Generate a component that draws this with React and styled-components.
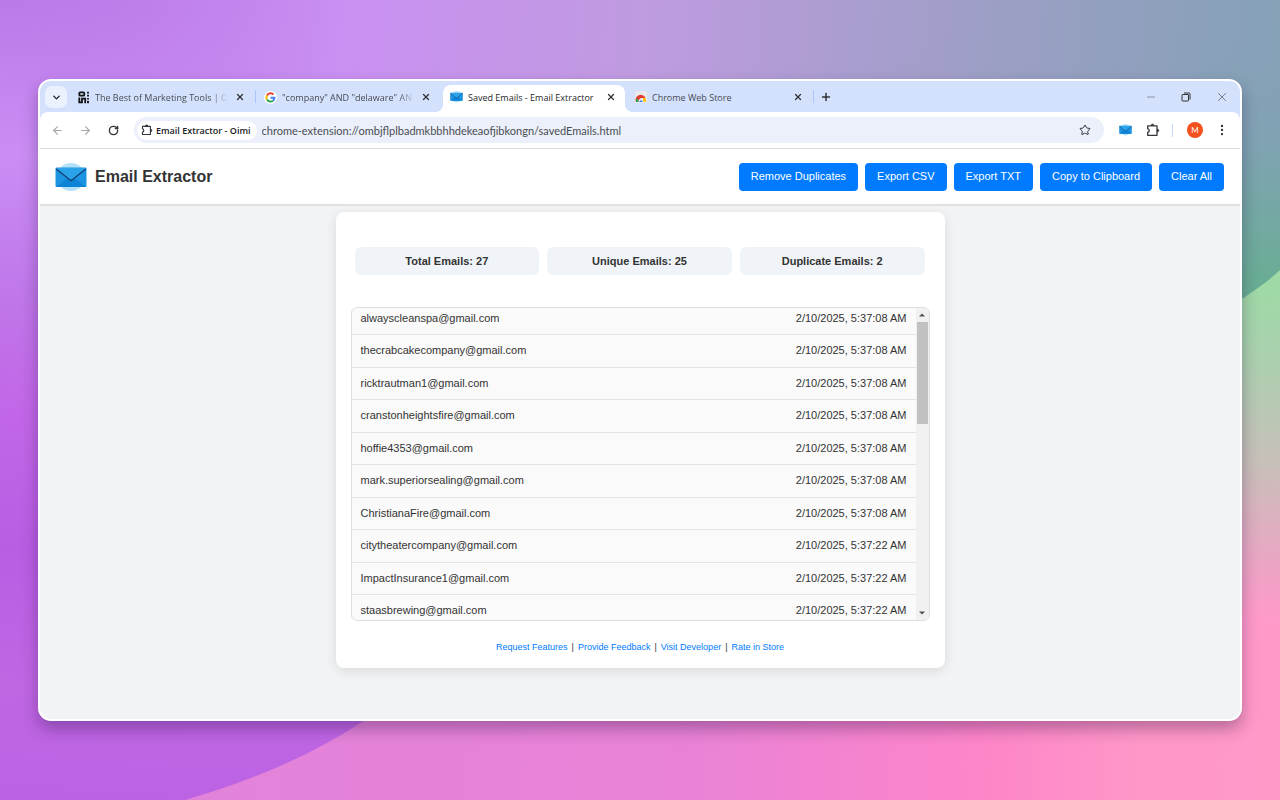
import React, { useLayoutEffect, useRef } from "react";
import styled, { createGlobalStyle } from "styled-components";
import { ArrowLeft, ArrowRight, ChevronDown, X, Plus, Minus, Star, RotateCw, EllipsisVertical } from "lucide-react";

const addressFont = 'Lato, "Open Sans", sans-serif';
const uiFont = '"Open Sans", "Noto Sans", sans-serif';
const pageFont = '"Liberation Sans", Arial, sans-serif';

const GlobalStyle = createGlobalStyle`
  *, *::before, *::after { box-sizing: border-box; }
  body { margin: 0; font-family: ${pageFont}; color: #333; }
  button, input { font: inherit; }
  button { border: 0; padding: 0; background: none; color: inherit; cursor: pointer; }
  svg { display: block; flex: none; }
`;

const Desktop = styled.div`
  position: relative;
  min-height: 100vh;
  display: flex;
  flex-direction: column;
  padding: 79px 38px;
  overflow: hidden;
`;

const Wallpaper = styled.svg`
  position: absolute;
  inset: 0;
  width: 100%;
  height: 100%;
`;

const Window = styled.main`
  position: relative;
  flex: 1;
  display: flex;
  flex-direction: column;
  border: 2px solid #fff;
  border-radius: 13px;
  background: #f2f3f5;
  box-shadow: 0 8px 16px rgba(30, 10, 60, 0.32);
  overflow: hidden;
`;

const BrowserChrome = styled.div`
  background: #d3e1fd;
`;

const TabStrip = styled.header`
  display: flex;
  align-items: flex-end;
  height: 31px;
  padding-left: 5px;
  font-family: ${uiFont};
  font-size: 9px;
  color: #474b52;
`;

const TabSearch = styled.button`
  display: grid;
  place-items: center;
  width: 22px;
  height: 22px;
  margin-bottom: 4px;
  border-radius: 7px;
  background: #ebf1fd;
  color: #222;
`;

const Tabs = styled.nav`
  display: flex;
  align-items: flex-end;
  margin-left: 3px;
`;

const Tab = styled.div`
  position: relative;
  display: flex;
  align-items: center;
  gap: 5px;
  width: ${(p) => p.$width}px;
  height: 27px;
  padding: 0 7px 3px;
  border-radius: 8px 8px 0 0;
  background: ${(p) => (p.$active ? "#fff" : "transparent")};
  color: ${(p) => (p.$active ? "#26282b" : "inherit")};
  &::before, &::after {
    content: "";
    display: ${(p) => (p.$active ? "block" : "none")};
    position: absolute;
    bottom: 0;
    width: 8px;
    height: 8px;
  }
  &::before { left: -8px; background: radial-gradient(circle at 0 0, transparent 8px, #fff 8px); }
  &::after { right: -8px; background: radial-gradient(circle at 100% 0, transparent 8px, #fff 8px); }
`;

const TabTitle = styled.span`
  flex: 1;
  overflow: hidden;
  white-space: nowrap;
  mask-image: ${(p) => (p.$fade ? "linear-gradient(90deg, #000 88%, transparent)" : "none")};
`;

const TabDivider = styled.span`
  width: 1px;
  height: 13px;
  margin: 0 1px 9px;
  background: ${(p) => (p.$clear ? "transparent" : "#a8c7fa")};
`;

const ToolbarDivider = styled.span`
  width: 1px;
  height: 13px;
  margin: 0 5px;
  background: #c5d8fa;
`;

const IconButton = styled.button`
  display: grid;
  place-items: center;
  width: ${(p) => p.$width || 14}px;
  height: 20px;
  color: ${(p) => p.$color || "#303236"};
`;

const NewTab = styled(IconButton)`
  margin: 0 0 5px 4px;
`;

const WindowControls = styled.div`
  display: flex;
  margin-left: auto;
  margin-bottom: 5px;
`;

const Toolbar = styled.div`
  display: flex;
  align-items: center;
  height: 37px;
  padding: 0 8px;
  border-bottom: 1px solid #dcdde0;
  border-radius: 8px 8px 0 0;
  background: #fff;
  font-family: ${addressFont};
`;

const NavButtons = styled.div`
  display: flex;
`;

const AddressBar = styled.div`
  flex: 1;
  display: flex;
  align-items: center;
  gap: 5px;
  height: 26px;
  margin: 0 7px 0 11px;
  padding: 0 9px 0 3px;
  border-radius: 13px;
  background: #ebf0fa;
`;

const ExtensionChip = styled.span`
  display: flex;
  align-items: center;
  gap: 3px;
  height: 19px;
  padding: 0 6px 0 4px;
  border-radius: 10px;
  background: #fff;
  font-family: ${uiFont};
  font-size: 9px;
  font-weight: 600;
  color: #202226;
  white-space: nowrap;
`;

const Address = styled.input`
  flex: 1;
  min-width: 0;
  padding: 0;
  border: 0;
  outline: 0;
  background: none;
  color: #4a4d53;
  font-size: 11px;
`;

const Avatar = styled.button`
  width: 16px;
  height: 16px;
  margin: 0 9px;
  border-radius: 50%;
  background: #f4511e;
  color: #fff;
  font-size: 8px;
  line-height: 16px;
`;

const AppHeader = styled.header`
  display: flex;
  align-items: center;
  justify-content: space-between;
  height: 57px;
  padding: 0 16px 0 15px;
  border-bottom: 2px solid #e0e1e3;
  background: #fff;
`;

const Brand = styled.div`
  display: flex;
  align-items: center;
  gap: 8px;
`;

const BrandName = styled.h1`
  margin: 0;
  font-size: 16px;
  line-height: 20px;
`;

const Actions = styled.div`
  display: flex;
  gap: 7px;
`;

const ActionButton = styled.button`
  height: 28px;
  padding: 0 12px 2px;
  border-radius: 4px;
  background: #007bff;
  color: #fff;
  font-size: 11px;
  white-space: nowrap;
`;

const Card = styled.section`
  width: 100%;
  max-width: 609px;
  margin: 6px auto 0;
  padding: 35px 15px 14px;
  border-radius: 8px;
  background: #fff;
  box-shadow: 0 3px 12px rgba(0, 0, 0, 0.1);
`;

const Stats = styled.div`
  display: grid;
  grid-template-columns: repeat(3, 1fr);
  gap: 8px;
  margin: 0 5px 32px 4px;
`;

const Stat = styled.p`
  margin: 0;
  border-radius: 6px;
  background: #f0f3f8;
  font-size: 11px;
  font-weight: 700;
  line-height: 28px;
  text-align: center;
`;

const ListFrame = styled.div`
  display: flex;
  height: 314px;
  border: 1px solid #e0e0e0;
  border-radius: 6px;
  background: #fafafa;
  overflow: hidden;
`;

const ListViewport = styled.div`
  flex: 1;
  overflow-y: auto;
  scrollbar-width: none;
`;

const EmailTable = styled.table`
  width: 100%;
  border-collapse: separate;
  border-spacing: 0;
  font-size: 11px;
`;

const EmailRow = styled.tr`
  height: 32px;
  &:nth-child(even) { height: 33px; }
`;

const Cell = styled.td`
  padding: 0 9px 2px;
  border-bottom: 1px solid #e4e4e4;
  text-align: ${(p) => p.$align || "left"};
`;

const ScrollTrack = styled.div`
  display: flex;
  flex-direction: column;
  align-items: center;
  width: 13px;
  background: #f1f1f1;
`;

const ScrollArrow = styled.button`
  display: grid;
  place-items: center;
  width: 13px;
  height: 14px;
  margin-top: ${(p) => (p.$end ? "auto" : 0)};
`;

const ScrollThumb = styled.div`
  width: 11px;
  height: 102px;
  background: #c1c1c1;
`;

const FooterLinks = styled.footer`
  display: flex;
  justify-content: center;
  gap: 4px;
  margin-top: 20px;
  font-size: 9px;
  line-height: 13px;
  a { color: #007bff; text-decoration: none; }
`;

const TAB_ICON = 13;

function Envelope({ width }) {
  return (
    <svg width={width} height={width * 0.875} viewBox="0 0 32 28" aria-hidden="true">
      <circle cx="16" cy="14" r="14" fill="#b3e0fb" />
      <rect x="0.5" y="4.5" width="31" height="19.5" rx="1" fill="#1d94e2" />
      <path d="M1 24 12 15.500 16 18 20 15.500 31 24Z" fill="#0d83d6" />
      <path d="M1 5H31L16 17.500Z" fill="#2ba3ea" />
      <path d="M1.200 6 16 17.800 30.800 6" fill="none" stroke="#123f70" strokeWidth="1.200" />
    </svg>
  );
}

function OimiIcon() {
  return (
    <svg width={TAB_ICON} height={TAB_ICON} viewBox="0 0 13 13" fill="none" stroke="#111" strokeWidth="1.800" aria-hidden="true">
      <rect x="2.300" y="1.300" width="5" height="3.400" rx="1" />
      <path d="M11 0.800V2.600M11 3.800V5.600M11 7V8.600M11 9.800V12.200" />
      <path d="M2.300 6.600V11.400H5V7.600H8.200V12.200" />
    </svg>
  );
}

function GoogleIcon() {
  return (
    <svg width={TAB_ICON} height={TAB_ICON} viewBox="0 0 26 26" aria-hidden="true">
      <circle cx="13" cy="13" r="13" fill="#fff" />
      <g fill="none" strokeWidth="4">
        <path d="M19 7A8 8 0 0 0 6 9" stroke="#ea4335" />
        <path d="M6 9A8 8 0 0 0 6 17" stroke="#fbbc05" />
        <path d="M6 17A8 8 0 0 0 18 19.500" stroke="#34a853" />
        <path d="M18 19.500A8 8 0 0 0 21 13.500H13" stroke="#4285f4" />
      </g>
    </svg>
  );
}

function StoreIcon() {
  return (
    <svg width="12" height="12" viewBox="0 0 24 24" aria-hidden="true">
      <path d="M0 0H24V24H0Z" fill="#e9e9ec" />
      <path d="M2 22A10 10 0 0 1 21 14H12Z" fill="#e33b2e" />
      <path d="M2 22A10 10 0 0 1 4 14L9 22Z" fill="#2a9f4c" />
      <path d="M21 14A10 10 0 0 1 22 22H15L16 14Z" fill="#fbc116" />
      <path d="M7 22A5 5 0 0 1 17 22Z" fill="#fff" />
      <path d="M8.500 22A3.500 3.500 0 0 1 15.500 22Z" fill="#3b78e7" />
    </svg>
  );
}

function PuzzleIcon({ size }) {
  return (
    <svg width={size} height={size} viewBox="0 0 14 14" fill="none" stroke="#33363b" strokeWidth="1.300" strokeLinejoin="round" aria-hidden="true">
      <path d="M1.700 2.800H11V12.300H1.700V9.500A2 2 0 0 0 1.700 5.600Z" />
      <path d="M5 2.500A1.500 1.500 0 0 1 8 2.500ZM11.300 6A1.500 1.500 0 0 1 11.300 9Z" fill="#33363b" strokeWidth="0.600" />
    </svg>
  );
}

function RestoreIcon() {
  return (
    <svg width="10" height="10" viewBox="0 0 10 10" fill="none" stroke="#333" strokeWidth="1" aria-hidden="true">
      <rect x="1" y="2.500" width="6.500" height="6.500" rx="0.500" />
      <path d="M3 1H8Q9 1 9 2V7.500" />
    </svg>
  );
}

function Background() {
  return (
    <Wallpaper viewBox="0 0 1280 800" preserveAspectRatio="none" aria-hidden="true">
      <defs>
        <linearGradient id="left" gradientUnits="userSpaceOnUse" x1="0" y1="0" x2="-60" y2="800">
          <stop offset="0" stopColor="#bb7ae8" />
          <stop offset="0.190" stopColor="#cb8df4" />
          <stop offset="0.370" stopColor="#bf76e9" />
          <stop offset="0.500" stopColor="#c267e7" />
          <stop offset="0.680" stopColor="#b95de3" />
          <stop offset="0.850" stopColor="#c066e3" />
          <stop offset="1" stopColor="#bb62e4" />
        </linearGradient>
        <linearGradient id="top" gradientUnits="userSpaceOnUse" x1="0" y1="0" x2="1280" y2="120">
          <stop offset="0" stopColor="#c080ec" stopOpacity="0" />
          <stop offset="0.270" stopColor="#ca90f2" />
          <stop offset="0.500" stopColor="#bf9be0" />
          <stop offset="0.780" stopColor="#9b9fc4" />
          <stop offset="1" stopColor="#84a1b6" />
        </linearGradient>
        <linearGradient id="right" gradientUnits="userSpaceOnUse" x1="0" y1="0" x2="0" y2="800">
          <stop offset="0.050" stopColor="#86a1b7" stopOpacity="0" />
          <stop offset="0.180" stopColor="#80a3b3" />
          <stop offset="0.360" stopColor="#68ad93" />
        </linearGradient>
        <linearGradient id="arc" gradientUnits="userSpaceOnUse" x1="0" y1="0" x2="0" y2="800">
          <stop offset="0.360" stopColor="#9fd9a6" />
          <stop offset="0.440" stopColor="#a9d1ae" />
          <stop offset="0.580" stopColor="#c8bfb9" />
          <stop offset="0.700" stopColor="#eaa6c4" />
          <stop offset="0.770" stopColor="#ff9ac9" />
          <stop offset="1" stopColor="#ff98c6" />
        </linearGradient>
        <linearGradient id="bottom" gradientUnits="userSpaceOnUse" x1="200" y1="0" x2="1280" y2="0">
          <stop offset="0" stopColor="#e283da" />
          <stop offset="0.450" stopColor="#e982d7" />
          <stop offset="0.720" stopColor="#fd85c9" />
          <stop offset="0.880" stopColor="#ff98c8" />
          <stop offset="1" stopColor="#ff99c8" />
        </linearGradient>
      </defs>
      <path d="M0 0H1280V800H0Z" fill="url(#left)" />
      <path d="M0 0H1280V400H640V90H0Z" fill="url(#top)" />
      <path d="M1200 0H1280V400H1200Z" fill="url(#right)" />
      <path d="M1280 270Q1262 288 1200 325V800H1280Z" fill="url(#arc)" />
      <path d="M185 800Q290 770 365 720L480 640H1280V800Z" fill="url(#bottom)" />
    </Wallpaper>
  );
}

const tabs = [
  { title: "The Best of Marketing Tools | O", icon: <OimiIcon />, width: 184, fade: true },
  { title: "\"company\" AND \"delaware\" AN", icon: <GoogleIcon />, width: 183, fade: true },
  { title: "Saved Emails - Email Extractor", icon: <Envelope width={TAB_ICON} />, width: 182, active: true },
  { title: "Chrome Web Store", icon: <StoreIcon />, width: 184 },
];

const actions = ["Remove Duplicates", "Export CSV", "Export TXT", "Copy to Clipboard", "Clear All"];
const stats = ["Total Emails: 27", "Unique Emails: 25", "Duplicate Emails: 2"];

const EARLY = "2/10/2025, 5:37:08 AM";
const LATE = "2/10/2025, 5:37:22 AM";
const emails = [
  ["alwayscleanspa@gmail.com", EARLY],
  ["thecrabcakecompany@gmail.com", EARLY],
  ["ricktrautman1@gmail.com", EARLY],
  ["cranstonheightsfire@gmail.com", EARLY],
  ["hoffie4353@gmail.com", EARLY],
  ["mark.superiorsealing@gmail.com", EARLY],
  ["ChristianaFire@gmail.com", EARLY],
  ["citytheatercompany@gmail.com", LATE],
  ["ImpactInsurance1@gmail.com", LATE],
  ["staasbrewing@gmail.com", LATE],
];

const links = ["Request Features", "Provide Feedback", "Visit Developer", "Rate in Store"];

function EmailList() {
  const viewport = useRef(null);
  useLayoutEffect(() => {
    viewport.current.scrollTop = 5;
  }, []);
  return (
    <ListFrame>
      <ListViewport ref={viewport}>
        <EmailTable aria-label="Saved emails">
          <tbody>
            {emails.map(([address, saved]) => (
              <EmailRow key={address}>
                <Cell>{address}</Cell>
                <Cell $align="right">{saved}</Cell>
              </EmailRow>
            ))}
          </tbody>
        </EmailTable>
      </ListViewport>
      <ScrollTrack>
        <ScrollArrow aria-label="Scroll up">
          <svg width="6" height="4" viewBox="0 0 6 4"><path d="M0 3.500 3 0.500 6 3.500Z" fill="#505050" /></svg>
        </ScrollArrow>
        <ScrollThumb />
        <ScrollArrow $end aria-label="Scroll down">
          <svg width="6" height="4" viewBox="0 0 6 4"><path d="M0 0.500 3 3.500 6 0.500Z" fill="#505050" /></svg>
        </ScrollArrow>
      </ScrollTrack>
    </ListFrame>
  );
}

export default function App() {
  return (
    <Desktop>
      <GlobalStyle />
      <Background />
      <Window>
        <BrowserChrome>
          <TabStrip>
            <TabSearch aria-label="Search tabs"><ChevronDown size={11} strokeWidth={3} /></TabSearch>
            <Tabs>
              {tabs.map((tab, i) => (
                <React.Fragment key={tab.title}>
                  <Tab $active={tab.active} $width={tab.width}>
                    {tab.icon}
                    <TabTitle $fade={tab.fade}>{tab.title}</TabTitle>
                    <IconButton aria-label="Close tab"><X size={10} strokeWidth={3} /></IconButton>
                  </Tab>
                  <TabDivider $clear={tab.active || tabs[i + 1]?.active} />
                </React.Fragment>
              ))}
            </Tabs>
            <NewTab aria-label="New tab"><Plus size={12} strokeWidth={3} /></NewTab>
            <WindowControls>
              <IconButton $width={35} $color="#8791a3" aria-label="Minimize"><Minus size={12} /></IconButton>
              <IconButton $width={35} aria-label="Restore"><RestoreIcon /></IconButton>
              <IconButton $width={37} aria-label="Close window"><X size={14} strokeWidth={1} /></IconButton>
            </WindowControls>
          </TabStrip>
          <Toolbar>
            <NavButtons>
              <IconButton $width={19} $color="#a5a7aa" aria-label="Back"><ArrowLeft size={13} /></IconButton>
              <IconButton $width={37} $color="#a5a7aa" aria-label="Forward"><ArrowRight size={13} /></IconButton>
              <IconButton $width={19} aria-label="Reload"><RotateCw size={11} strokeWidth={3} /></IconButton>
            </NavButtons>
            <AddressBar>
              <ExtensionChip><PuzzleIcon size={12} />Email Extractor - Oimi</ExtensionChip>
              <Address aria-label="Address" defaultValue="chrome-extension://ombjflplbadmkbbhhdekeaofjibkongn/savedEmails.html" />
              <IconButton $width={20} aria-label="Bookmark"><Star size={12} /></IconButton>
            </AddressBar>
            <IconButton $width={28} aria-label="Email Extractor extension"><Envelope width={13} /></IconButton>
            <IconButton $width={28} aria-label="Extensions"><PuzzleIcon size={14} /></IconButton>
            <ToolbarDivider />
            <Avatar aria-label="Profile">M</Avatar>
            <IconButton $width={20} aria-label="Menu"><EllipsisVertical size={14} strokeWidth={2} /></IconButton>
          </Toolbar>
        </BrowserChrome>
        <AppHeader>
          <Brand>
            <Envelope width={32} />
            <BrandName>Email Extractor</BrandName>
          </Brand>
          <Actions>
            {actions.map((label) => <ActionButton key={label}>{label}</ActionButton>)}
          </Actions>
        </AppHeader>
        <Card>
          <Stats>{stats.map((text) => <Stat key={text}>{text}</Stat>)}</Stats>
          <EmailList />
          <FooterLinks>
            {links.map((text, i) => (
              <React.Fragment key={text}>
                {i > 0 && <span>|</span>}
                <a href="#top">{text}</a>
              </React.Fragment>
            ))}
          </FooterLinks>
        </Card>
      </Window>
    </Desktop>
  );
}
